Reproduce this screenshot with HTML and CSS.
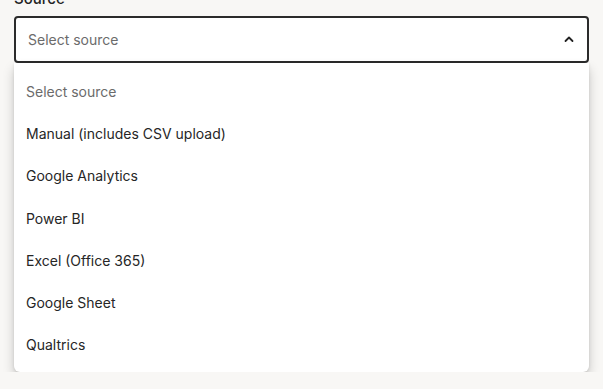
FILE: index.html
```html
<!DOCTYPE html>
<html lang="en">

<head>
    <meta charset="UTF-8">
    <meta name="viewport" content="width=device-width, initial-scale=1.0">
    <title>Source</title>
    <link rel="stylesheet" href="styles.css">
</head>

<body>
    <div class="field">
        <label class="label">Source</label>
        <div class="select">
            <span class="placeholder">Select source</span>
            <svg class="chevron" width="12" height="8" viewBox="0 0 12 8">
                <path d="M2.5 6 L6 2.5 L9.5 6" fill="none" stroke="#222" stroke-width="1.8" stroke-linecap="round" stroke-linejoin="round" />
            </svg>
        </div>
        <ul class="menu">
            <li class="option muted">Select source</li>
            <li class="option">Manual (includes CSV upload)</li>
            <li class="option">Google Analytics</li>
            <li class="option">Power BI</li>
            <li class="option">Excel (Office 365)</li>
            <li class="option">Google Sheet</li>
            <li class="option">Qualtrics</li>
        </ul>
    </div>
</body>

</html>
```

FILE: styles.css
```css
* {
    box-sizing: border-box;
}

html {
    background: #f8f7f5;
}

body {
    margin: 0;
    padding: 0;
    font-family: Inter, "Noto Sans", sans-serif;
    font-size: 14px;
    color: #262626;
}

.field {
    margin: -11px 14px 0 14px;
}

.label {
    display: block;
    font-size: 15px;
    font-weight: 500;
    color: #222;
    line-height: 20px;
    margin-bottom: 7px;
}

.select {
    display: flex;
    align-items: center;
    justify-content: space-between;
    height: 47px;
    padding: 0 12px 0 12px;
    background: white;
    border: 2px solid #2b2b2b;
    border-radius: 4px;
}

.placeholder {
    color: #6b6b6b;
}

.chevron {
    margin-top: -1px;
}

.menu {
    list-style: none;
    margin: 0;
    padding: 8px 0 6px 0;
    background: white;
    border-radius: 0 0 6px 6px;
    box-shadow: 0 6px 12px rgba(0, 0, 0, 0.2), 0 1px 3px rgba(0, 0, 0, 0.1);
}

.option {
    padding: 0 12px;
    height: 42.2px;
    line-height: 42.2px;
}

.muted {
    color: #6b6b6b;
}
```
